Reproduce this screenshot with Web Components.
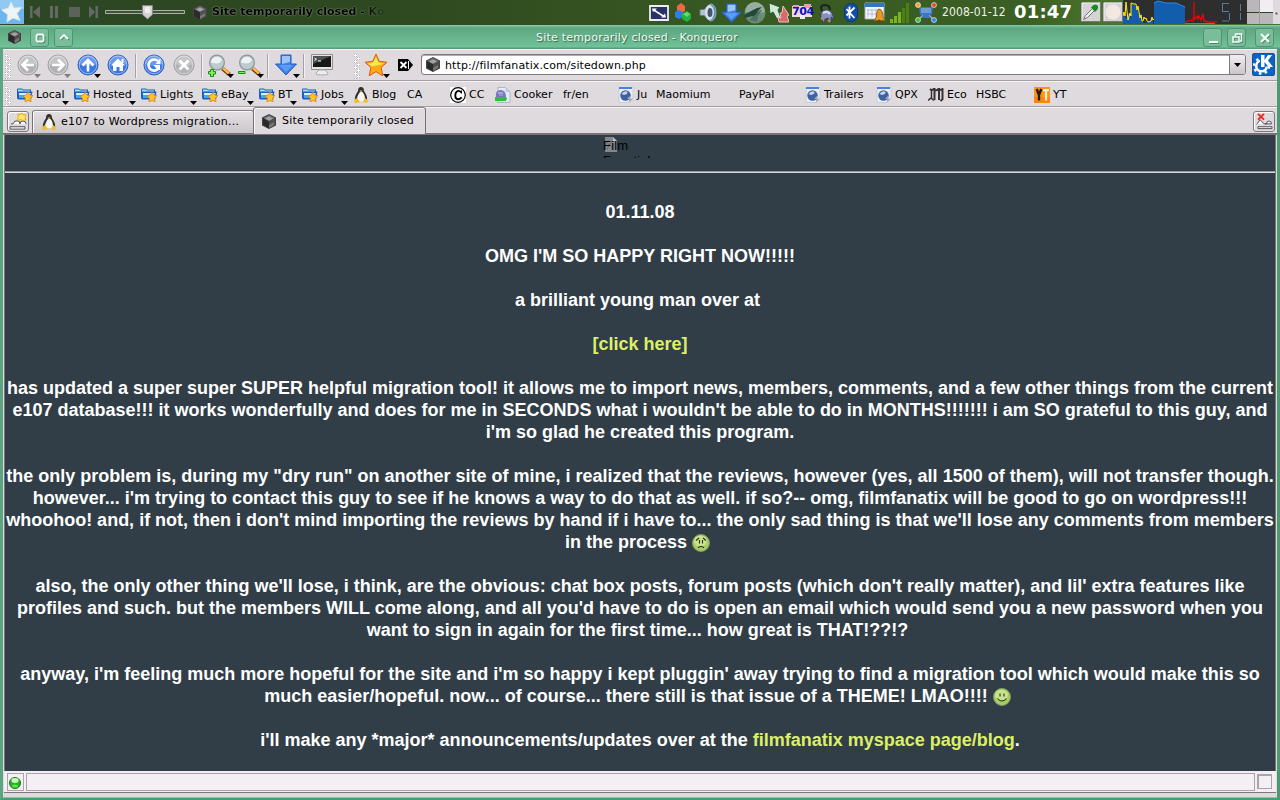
<!DOCTYPE html>
<html lang="en"><head><meta charset="utf-8"><title>Site temporarily closed - Konqueror</title>
<style>html,body{margin:0;width:1280px;height:800px;overflow:hidden;background:#2b4a25}</style></head>
<body><kde-desktop></kde-desktop>
<script>
const ball = (a,b,g) => `<circle cx="11" cy="11" r="10" fill="${b}" stroke="${a}"/><path d="M2 10a9 9 0 0 1 18 0q-9 4-18 0" fill="#fff" opacity=".25"/><circle cx="11" cy="11" r="8.8" fill="none" stroke="#fff" opacity=".45"/><g fill="none" stroke="#fff" stroke-width="2.600">${g}</g>`;
const cog = '<path d="M7 0 14 3.500v8L7 15 0 11.500v-8z" fill="#444"/><path d="M7 1 13 4 7 7.500 1 4z" fill="#6c6c6c"/><path d="M3 4.500 7 2.500l4 2-4 2z" fill="#a5a5a5"/><path d="M7 7.500 13 4v7L7 14.500z" fill="#4f4f4f"/><path d="M7 7.500 1 4v7l6 3.500z" fill="#2a2a2a"/><path d="M7 11l5-3v3l-5 3z" fill="#777"/>';
const lens = m => `<path d="M14.500 14.500l7 6" stroke="#6c4310" stroke-width="4"/><path d="M15 14l6 5.500" stroke="#ffb750" stroke-width="2.400"/><circle cx="9" cy="8.500" r="7.400" fill="#bccbd0" stroke="#8d9696" stroke-width="1.200"/><path d="M3 8.500a6 6 0 0 1 11-3q-2 6-11 3" fill="#fff" opacity=".75"/>${m}`;
const star = '<path d="M8 0 10.300 5.300 16 6 11.700 9.800 13 16 8 12.800 3 16 4.300 9.800 0 6 5.700 5.300z"';
const doc = '<path d="M1 .5h14v11l-4 4H1z" fill="#e9edf4" stroke="#c5cedb"/><path d="M1 0h13v2H1z" fill="#4385dc"/><circle cx="7.500" cy="8.500" r="5.200" fill="#41609f"/><path d="M3.500 7q3-4 6-2L9 7 6 8zM9 12l3-3q0 3-3 3z" fill="#c3d3ef"/><path d="M11 15.500 15 11.500h-4z" fill="#aaa"/>';
const smile = m => `<circle cx="9" cy="9" r="8.500" fill="#a7cd68" stroke="#7d9b55"/><ellipse cx="8.500" cy="7" rx="6.500" ry="5.500" fill="#dff0ac" opacity=".6"/><g fill="none" stroke="#26301b" stroke-width="1.100">${m}</g>`;
const ICONS = {
 kmenu:['0 0 24 24','<path d="M0 0h24v24H0z" fill="#6eb4ee"/><path d="M0 0h24v9H0z" fill="#91c9f5"/><path d="M11 2 14 8l7.500-.5L17 13.500l3 7L13 18l-6 4 .5-7.500L1.500 10l7-2z" fill="#f0f4f6" stroke="#d3e3ec" stroke-linejoin="round"/>'],
 prev:['0 0 11 14','<path d="M0 1h2.500v12H0zM10 1v12L3 7z" fill="#656965"/>'],
 pause:['0 0 11 14','<path d="M1 1h3v12H1zM6 1h3v12H6z" fill="#656965"/>'],
 stop:['0 0 11 14','<path d="M0 2h11v10H0z" fill="#5c615a"/>'],
 next:['0 0 11 14','<path d="M1 1v12l6-6zM7.500 1H10v12H7.500z" fill="#656965"/>'],
 slider:['0 0 80 16','<path d="M.5 6.500h79v3H.5z" fill="#43513b" stroke="#aab0a7"/><path d="M37.500 1.500h10v9l-5 4.500-5-4.500z" fill="#d5d3d6" stroke="#888"/><path d="M40 3h5v6h-5z" fill="#efedf0"/>'],
 cube:['0 0 14 15',cog],
 screen:['0 0 20 16','<path d="M1 1h18v14H1z" fill="#283268" stroke="#eee" stroke-width="1.800"/><path d="M4 4.500l11 7" stroke="#fff" stroke-width="1.500"/><path d="M3 3.500h5L4 7zM17 12.500h-5l4-4z" fill="#fff"/>'],
 hexes:['0 0 17 19','<path d="M6 0l4 3v5l-4 3-4-3V3z" fill="#f2673b"/><path d="M4 7l4 2v5l-4 2-4-2V9z" fill="#2d81e5"/><path d="M12 8l4 3v5l-4 3-5-3v-5z" fill="#22b53b"/><path d="M12 9l3 2-3 3-4-3z" fill="#65dd75"/>'],
 speaker:['0 0 18 19','<path d="M1 6.500h4l6-5v16l-6-5H1z" fill="#b5c2ce" stroke="#67788b"/><ellipse cx="12" cy="9.500" rx="5" ry="8.500" fill="#5f93c0" stroke="#89a8c0"/><ellipse cx="10.500" cy="9.500" rx="4.500" ry="7.500" fill="#d6e1ea"/><ellipse cx="11" cy="9.500" rx="2.500" ry="4.500" fill="#44576b"/>'],
 down:['0 0 22 22','<path d="M6 1h10v9h5.500L11 21 .5 10H6z" fill="#3d80e6" stroke="#2459bb"/><path d="M7 2h8v6L7 10z" fill="#9cc4fb"/><path d="M4 11h14l-7 7z" fill="#5c9cf2"/>'],
 ksnap:['0 0 22 22','<circle cx="11" cy="11" r="10.500" fill="#6b8d78"/><path d="M1 10a10 10 0 0 1 20 0q-10 2-20 0" fill="#98aea0"/><path d="M0 13l7-4 6-3 5-1-4 4-2 7-4-2-7 2z" fill="#24493a"/><path d="M5 18l5-4 6-6 2 0-4 6-1 6z" fill="#4f7460"/>'],
 updown:['0 0 20 20','<path d="M0 0l11 4-2 3 3 8-4 1-4-7-3 2z" fill="#d5e9da" stroke="#1f5e3b"/><path d="M14 3l6 9-2 1 2 6H10l-1-5 3 1-1-5 2 0z" fill="#d66b6b" stroke="#f2bdbd"/>'],
 trans:['0 0 22 16','<path d="M0 2h20v11H0z" fill="#f5dadd"/><path d="M1 1h6v3H1zM12 0h7v4h-7z" fill="#e6a0a5"/><path d="M8 10h5v5H8z" fill="#eee"/>'],
 kget:['0 0 16 20','<path d="M3 7Q0 1 6 1q5 0 5 5" fill="none" stroke="#1c1f2b" stroke-width="2"/><path d="M2 9q6-6 11 0l2 6-3-2 0 6-3-5-3 1-1 4-3-5z" fill="#8790be" stroke="#353b63" stroke-width=".7"/><path d="M4 9q4-3 7 1" stroke="#d4d7ee" fill="none" stroke-width="2.500"/><path d="M2 15l2-1M9 16l2 2" stroke="#c68b60" stroke-width="2"/>'],
 bt:['0 0 14 19','<rect x=".5" y=".5" width="13" height="18" rx="6" fill="#124fa9" stroke="#0b3680"/><path d="M5.500 3.500v12M10.500 4.500l-5 5 5 5.500M2.500 6l3 3.500-3 3" stroke="#fff" stroke-width="1.800" fill="none"/>'],
 cal:['0 0 22 21','<path d="M1 1h19v16H1z" fill="#f2f5fa" stroke="#aab"/><path d="M1 1h19v4H1z" fill="#3573c5"/><path d="M4 7v8M8 7v8M12 7v8M16 7v8M3 8h15M3 12h15" stroke="#b3bfd3"/><path d="M15 7q-2.500 1-2.500 8l-2.500 3.500h11L19 15q0-7-4-8" fill="#e79b27" stroke="#96600c"/><circle cx="15" cy="19" r="1.500" fill="#704207"/>'],
 signal:['0 0 19 20','<path d="M0 16h3v4H0zM4 13h3v7H4zM8 9h3v11H8z" fill="#7bb51c"/><path d="M12 5h3v15h-3zM16 0h3v20h-3z" fill="#4e7f14"/>'],
 net:['0 0 22 21','<path d="M4 4l14 13M18 4 4 17" stroke="#aab9cd" stroke-width="1.200"/><path d="M4 5h14l-1 8h-3l1 3H7l1-3H5z" fill="#3d74c5"/><path d="M6 6h10v5H6z" fill="#6f9bd5"/><circle cx="3" cy="3" r="2.500" fill="#f0a33a" stroke="#fff" stroke-width=".6"/><circle cx="19" cy="3" r="2.500" fill="#e54c2c" stroke="#fff" stroke-width=".6"/><circle cx="3" cy="18" r="2.500" fill="#42bd43" stroke="#fff" stroke-width=".6"/><circle cx="19" cy="18" r="2.500" fill="#3987e5" stroke="#fff" stroke-width=".6"/>'],
 pen:['0 0 20 20','<path d="M.5.5h19v19H.5z" fill="#d6d3d6" stroke="#777"/><path d="M1 1h18M1 1v18" stroke="#f7f5f7"/><path d="M2.500 17.500l2-4 7-7 2 2-7 7z" fill="#eee" stroke="#777"/><path d="M10 5.500q3-4 6-2.500 3 3-2 7z" fill="#198b22"/>'],
 paper:['0 0 20 20','<path d="M.5.5h19v19H.5z" fill="#d6d3d6" stroke="#777"/><path d="M1 1h18M1 1v18" stroke="#f7f5f7"/><circle cx="10" cy="10" r="7.500" fill="#f2e8df"/>'],
 graph:['0 0 124 24','<path d="M0 0h124v24H0z" fill="#2e2e2e"/><path d="M0 24V17l2-2 1 4 3-7 2 7V3l4 2 3 6 2 4 2-2v9l3 1 8-4v6z" fill="#165ba9"/><path d="M0 16 1 12l1 4 1-14 1 9 1 9 2-7 1 3V3l3 1 2 0 1 6 1-4 2 12 1-3 1 6 1 0 1-4 1 2 1-1 1 3 2 1 2-1 1-4 1 3 2-2" fill="none" stroke="#ffed19"/><path d="M31 2l4-1 8 2h10l9 4v17H31z" fill="#125dac"/><path d="M31 3l4-2 8 2h10l9 4" fill="none" stroke="#2688ef"/><path d="M62 23.500h30" stroke="#2688ef"/><path d="M62 22l4-1 1-1 3 1 1-6V2v16l1 1 2-3 1 3 1-3 2 4 2-6 1 7 4 1 2 0h7" fill="none" stroke="#f60000" stroke-width="1.300"/><path d="M99 3.500h7M99.500 4v7M99 11.500h7M106.500 13v7M99 21h7M117.500 4v7M117.500 13v7" stroke="#547ba0" fill="none"/>'],
 pager:['0 0 33 24','<path d="M0 0h33v24H0z" fill="#bab6ba"/><path d="M13 0h13v12H13z" fill="#f2edf3"/><path d="M26 0h7v24h-7z" fill="#dedade"/><path d="M0 12.500h26" stroke="#28451f"/><path d="M12.500 0v24" stroke="#a09ca1"/><circle cx="29.500" cy="13.500" r="1.300" fill="#777"/>'],
 back:['0 0 22 22',ball('#a09fa1','#b2b1b3','<path d="M17 11H6M11 5.500 5.500 11l5.500 5.500"/>')],
 fwd:['0 0 22 22',ball('#a09fa1','#b2b1b3','<path d="M5 11h11M11 5.500l5.500 5.500-5.500 5.500"/>')],
 up:['0 0 22 22',ball('#2b60c5','#3977e3','<path d="M11 17.500V6M5.500 11.500 11 6l5.500 5.500"/>')],
 home:['0 0 22 22',ball('#2b60c5','#3977e3','<path d="M4 11.500 11 4.500l7 7h-2V17h-3.500v-4h-3v4H6v-5.500z" fill="#fff" stroke="none"/><path d="M15.500 5v4" stroke-width="2"/>')],
 reload:['0 0 22 22',ball('#2b60c5','#3977e3','<path d="M15 7A5.600 5.600 0 1 0 15.500 14.500"/><path d="M10.500 11H17v5h-2.500zM17.500 4v6h-5z" fill="#fff" stroke="none"/>')],
 cancel:['0 0 22 22',ball('#a09fa1','#b2b1b3','<path d="M6.500 6.500l9 9M15.500 6.500l-9 9" stroke-width="3"/>')],
 zin:['0 0 24 24',lens('<path d="M.5 17.500h2v-2h3v2h2v2.500h-2v2.500h-3V20h-2z" fill="#80ed5b" stroke="#168e12"/>')],
 zout:['0 0 24 24',lens('<path d="M.5 17.500h6.500v2H.5z" fill="#80ed5b" stroke="#168e12"/>')],
 term:['0 0 22 22','<path d="M.5.5h21v15H.5z" fill="#e4e5e2" stroke="#91928f"/><path d="M2 2h18v11H2z" fill="#161917"/><path d="M2 2h18L2 10z" fill="#4c504e"/><path d="M3.500 4l2 1.200-2 1.300M7 7h3" stroke="#fff" fill="none"/><path d="M8 16h6l3 3q1 2-6 2t-6-2z" fill="#ececea" stroke="#aaa"/>'],
 fav:['0 0 16 16',star+' fill="#ffac10" stroke="#e54e10" stroke-width=".7"/><path d="M8 2 9.700 6 14 7l-9 2-3-2 4-1z" fill="#ffe35c"/>'],
 clear:['0 0 15 12','<path d="M0 0h10l5 6-5 6H0z" fill="#000"/><path d="M2.500 3l6 6M8.500 3l-6 6" stroke="#fff" stroke-width="1.800"/><path d="M10.500 2v8" stroke="#fff"/>'],
 arrow:['0 0 7 4','<path d="M0 0h7L3.500 4z" fill="currentColor"/>'],
 kgear:['0 0 23 23','<rect x=".5" y=".5" width="22" height="22" rx="1.500" fill="#0765c7" stroke="#20518c"/><circle cx="9.500" cy="13" r="5.300" fill="none" stroke="#fff" stroke-width="2.600"/><circle cx="9.500" cy="13" r="7.600" fill="none" stroke="#fff" stroke-width="2.200" stroke-dasharray="2.600 3.370"/><path d="M8 1h13v12.500H8z" fill="#0765c7"/><path d="M9 2h3.500v5L16 2h4l-4 5.500 5 6.500h-4.500l-4-5v5H9z" fill="#fff"/>'],
 folder:['0 0 16 14','<path d="M0 1.500Q0 .5 1 .5h4l1 1h8v2h1.500L14 11.500H1L0 10z" fill="#1b5fc2"/><path d="M1 1.500h4l1 1h7v1H1z" fill="#9fe0ff"/><path d="M2 5h12l-1 5H2z" fill="#4aa5ea"/><path d="M2 5h11.500L13 7H2z" fill="#d5f3ff"/><path d="M11 4l1.600 3 3.400.6-2.400 2.400.4 3.800-3-1.400-3 1.400.3-3.800L6 7.600 9.300 7z" fill="#ffc32a" stroke="#dc7608" stroke-width=".7"/>'],
 tux:['0 0 14 16','<path d="M7 0q3 0 3 4 4 6 3 9H1Q0 10 4 4q0-4 3-4" fill="#30302e"/><path d="M6 5h2.500Q12 9 10.500 14h-7Q2 10 6 5" fill="#f6f5f1"/><path d="M5.500 3.500h3L7 5.500zM0 13l3-2 3 4-5 1zM14 13l-3-2-2 4 4 1z" fill="#f2bd22"/>'],
 cc:['0 0 16 16','<path d="M0 0h16v16H0z" fill="#fff"/><circle cx="8" cy="8" r="7.300" fill="#fff" stroke="#000" stroke-width="1.200"/><path d="M11.500 5.500Q8 2 5.700 6q-1.500 5 2 6.300 2 .2 4-2" fill="none" stroke="#000" stroke-width="1.900"/><path d="M11.500 3.500v3" stroke="#000"/>'],
 cooker:['0 0 16 16','<path d="M3 .5h7.500L15 5v10.500H3z" fill="#e6ecf5" stroke="#a9b8cb"/><path d="M10.500 1v4H15z" fill="#b9cde8"/><path d="M1 10q-1-7 4.500-7T11 10z" fill="#7b76bf"/><path d="M3 6h5" stroke="#d4d6fa"/><path d="M4 8h4" stroke="#a9a7dc"/><path d="M0 10h11l1 1-1 3H0z" fill="#24c634"/>'],
 doc:['0 0 16 16',doc],
 eco:['0 0 16 14','<path d="M2 1q2 2 4.500-.5V12M7 2.500q2 0 4-2V12M11.500 2q2 0 3.500-1.500-1 2-.5 3V11l-2 2" fill="none" stroke="#333" stroke-width="2"/><path d="M3.500 2v8M0 12.500l3-2.500 3 2.500" fill="none" stroke="#333" stroke-width="1.500"/>'],
 yt:['0 0 16 16','<path d="M0 0h16v16H0z" fill="#ff9410"/><path d="M0 10h16v6H0z" fill="#fb7708" opacity=".5"/><path d="M2.700 2l2.300 6v5.500M7.300 2 5 8" stroke="#231b15" stroke-width="2.400" fill="none"/><path d="M9 3.200h6M12 3v10.500" stroke="#fff0dc" stroke-width="2.200"/>'],
 newtab:['0 0 20 20','<path d="M3 12.500h2l2-3h4l1 3M12 12.500q0-3 3-3t3 3M2 15.500h15v2.500H2z" fill="#f9f7fa" stroke="#514e52"/><path d="M10 2l2 1 2-2 1 2h3l-1 3 1 2-3 1-2-1-3 1V6z" fill="#ffec66" stroke="#e9a800"/>'],
 closetab:['0 0 20 20','<path d="M2.500 13l1-1 2.500-4 4 4.500h2.500q0-3 2.500-3t2.500 3H11M4 15.500h14v2H4z" fill="#f9f7fa" stroke="#514e52"/><path d="M4 2l6 6M10 2 4 8" stroke="#ee2a20" stroke-width="2"/>'],
 broken:['0 0 14 16','<path d="M1 0h8l4 4v11H1z" fill="#82888c"/><path d="M9 0v4h4z" fill="#b7bdc2"/><path d="M2 5l7 6M8 4l-5 8" stroke="#5e686d"/>'],
 sad:['0 0 18 18',smile('<path d="M7.500 6v3.500M10.500 6v3.500M4 6.500 7 4M11 4l3 2.500M6 13.800q3-2.500 6 0"/>')],
 happy:['0 0 18 18',smile('<path d="M7 5.500v3M11 5.500v3M4.500 10.500q4.500 5 9 0"/>')],
 led:['0 0 12 12','<circle cx="6" cy="6" r="5.500" fill="#25b51f" stroke="#147a15"/><ellipse cx="6" cy="3.500" rx="3.600" ry="2.400" fill="#cff7c4"/><ellipse cx="6" cy="9" rx="3" ry="1.600" fill="#60e745"/>'],
 circ:['0 0 18 18','<path d="M6.500 5.500h5l1 1v5l-1 1h-5l-1-1v-5z" fill="none" stroke="#4a8868" stroke-width="1.800" transform="translate(1 1)"/><path d="M6.500 5.500h5l1 1v5l-1 1h-5l-1-1v-5z" fill="none" stroke="#f4fff9" stroke-width="1.800"/>'],
 shade:['0 0 18 18','<path d="M6 11l4-4 4 4" fill="none" stroke="#4a8868" stroke-width="1.600"/><path d="M5 10l4-4 4 4" fill="none" stroke="#f4fff9" stroke-width="1.800"/>'],
 min:['0 0 18 18','<path d="M6 14.500h9" stroke="#4a8868"/><path d="M5 13h9" stroke="#f4fff9" stroke-width="2"/>'],
 rest:['0 0 18 18','<path d="M7.500 7V5h6v7H12M5 8h6v5H5z" fill="none" stroke="#4a8868" stroke-width="1.300" transform="translate(1 1)"/><path d="M7.500 7V5h6v7H12M5 8h6v5H5z" fill="none" stroke="#f4fff9" stroke-width="1.500"/>'],
 x:['0 0 18 18','<path d="M6 6l8 8M14 6l-8 8" stroke="#4a8868" stroke-width="2"/><path d="M5 5l8 8M13 5l-8 8" stroke="#f4fff9" stroke-width="2.200"/>']
};
const define = (tag, html) => customElements.define(tag, class extends HTMLElement {
  constructor(){ super(); this.attachShadow({mode:'open'}).innerHTML = html; }
});
/* <kde-icon name w h ml mt>: one drawing out of the icon table */
customElements.define('kde-icon', class extends HTMLElement {
  connectedCallback(){
    const a = n => this.getAttribute(n), [vb,body] = ICONS[a('name')], v = vb.split(' ');
    const w = a('w')||v[2], h = a('h')||v[3];
    (this.shadowRoot||this.attachShadow({mode:'open'})).innerHTML = `<style>:host{display:block;flex:none;width:${w}px;height:${h}px;margin-left:${a('ml')||0}px;margin-top:${a('mt')||0}px}svg{display:block}</style><svg width="${w}" height="${h}" viewBox="${vb}" preserveAspectRatio="none">${body}</svg>`;
  }
});
/* <tool-button name w menu>: toolbar icon, with an optional popup marker */
customElements.define('tool-button', class extends HTMLElement {
  connectedCallback(){
    const a = n => this.getAttribute(n)||'';
    this.attachShadow({mode:'open'}).innerHTML = `<style>:host{display:block;position:relative;flex:none;width:${a('w')}px}.m{position:absolute;left:${a('mx')||17}px;top:20px;color:${a('menu')||'#000'}}</style><kde-icon name="${a('name')}" w="${a('iw')||22}" h="${a('ih')||22}"></kde-icon>${a('menu')?'<kde-icon class="m" name="arrow"></kde-icon>':''}`;
  }
});
/* <book-mark icon w menu>label</book-mark> */
customElements.define('book-mark', class extends HTMLElement {
  connectedCallback(){
    const a = n => this.getAttribute(n)||'';
    this.attachShadow({mode:'open'}).innerHTML = `<style>:host{display:flex;position:relative;flex:none;align-items:center;width:${a('w')}px;height:18px;white-space:nowrap}.t{margin-left:${a('icon')?(a('g')||3):0}px}.m{position:absolute;left:${a('menu')}px;top:15px;color:#000}</style>${a('icon')?`<kde-icon name="${a('icon')}" w="${a('iw')||16}" h="${a('ih')||16}"></kde-icon>`:''}<span class="t"><slot></slot></span>${a('menu')?'<kde-icon class="m" name="arrow"></kde-icon>':''}`;
  }
});
define('tool-handle','<style>:host{display:block;flex:none;width:6px;height:25px;background:radial-gradient(circle at 1.5px 1.5px,#fff 1px,#aaa6aa 1.5px,transparent 2px) 0 0/6px 6px,radial-gradient(circle at 1.5px 1.5px,#fff 1px,#aaa6aa 1.5px,transparent 2px) 3px 3px/6px 6px}</style>');
define('tool-sep','<style>:host{display:block;flex:none;width:1px;height:24px;background:#a5a1a5;border-right:1px solid #f5f2f5}</style>');
define('win-button','<style>:host{display:block;flex:none;box-sizing:border-box;width:19px;height:19px;border:1px solid #4f9573;border-radius:3px;background:#79bd9b;overflow:hidden}</style><slot></slot>');
define('desk-panel',`<style>:host{display:flex;height:25px;background:linear-gradient(90deg,#2d4624,#2e4820 30%,#395b22 60%,#3a5e23 80%,#4a732b 86%);font:11px "DejaVu Sans",sans-serif;position:relative}
.song{width:176px;margin:5px 0 0 5px;font-weight:bold;line-height:14px;white-space:nowrap;overflow:hidden;color:#000;text-shadow:0 0 2px #8a9a80,0 0 1px #8a9a80;-webkit-mask:linear-gradient(90deg,#000 150px,transparent 175px)}
.num{position:relative;width:22px;flex:none;margin:4px 0 0 3px}.num span{position:absolute;left:0;top:1px;font:bold 11px/14px "DejaVu Sans",sans-serif;color:#0a12c6;letter-spacing:-.4px}
.date{font:12px/14px "DejaVu Sans Condensed","DejaVu Sans",sans-serif;color:#f0f2ec;margin:5px 0 0 5px;width:65px;white-space:nowrap;flex:none;letter-spacing:.1px}
.time{font:bold 18px/22px "DejaVu Sans",sans-serif;color:#fff;margin:1px 0 0 7px;width:67px;flex:none;letter-spacing:.2px}</style>
<kde-icon name="kmenu"></kde-icon><kde-icon name="prev" ml="6" mt="5"></kde-icon><kde-icon name="pause" ml="8" mt="5"></kde-icon><kde-icon name="stop" ml="9" mt="5"></kde-icon><kde-icon name="next" ml="8" mt="5"></kde-icon><kde-icon name="slider" ml="6" mt="4"></kde-icon><kde-icon name="cube" ml="8" mt="5"></kde-icon>
<div class="song">Site temporarily closed - Ko</div>
<kde-icon name="screen" ml="261" mt="5"></kde-icon><kde-icon name="hexes" ml="6" mt="3"></kde-icon><kde-icon name="speaker" ml="7" mt="3"></kde-icon><kde-icon name="down" w="21" h="20" ml="4" mt="3"></kde-icon><kde-icon name="ksnap" ml="2" mt="2"></kde-icon><kde-icon name="updown" ml="3" mt="3"></kde-icon>
<div class="num"><kde-icon name="trans"></kde-icon><span>704</span></div>
<kde-icon name="kget" ml="5" mt="4"></kde-icon><kde-icon name="bt" ml="9" mt="3"></kde-icon><kde-icon name="cal" ml="6" mt="2"></kde-icon><kde-icon name="signal" ml="4" mt="3"></kde-icon><kde-icon name="net" ml="6" mt="2"></kde-icon>
<div class="date">2008-01-12</div><div class="time">01:47</div>
<kde-icon name="pen" mt="2"></kde-icon><kde-icon name="paper" ml="2" mt="2"></kde-icon><kde-icon name="graph"></kde-icon><kde-icon name="pager"></kde-icon>`);
define('title-bar',`<style>:host{display:flex;box-sizing:border-box;height:24px;padding:3px 6px 0 9px;background:linear-gradient(#87cfab 0,#5ea681 3px,#70c298 22px,#5b9a7b 23px,#5b9a7b);font:11px/19px "DejaVu Sans",sans-serif;color:#f0faf4;text-shadow:1px 1px 1px #35664d}
span{flex:1;text-align:center;white-space:nowrap;letter-spacing:.2px;margin-right:2px}</style>
<kde-icon name="cube" w="13" h="14" mt="2" ml="-1"></kde-icon><win-button style="margin-left:9px"><kde-icon name="circ"></kde-icon></win-button><win-button style="margin-left:5px"><kde-icon name="shade"></kde-icon></win-button>
<span>Site temporarily closed - Konqueror</span>
<win-button><kde-icon name="min"></kde-icon></win-button><win-button style="margin-left:5px"><kde-icon name="rest"></kde-icon></win-button><win-button style="margin-left:9px"><kde-icon name="x"></kde-icon></win-button>`);
define('nav-bar',`<style>:host{display:flex;box-sizing:border-box;height:32px;padding:4px 0 0 3px;border-top:1px solid #f7f4f7;border-bottom:1px solid #a29ea2;font:11px/22px "DejaVu Sans",sans-serif;color:#000}
.url{display:flex;box-sizing:border-box;width:825px;height:21px;margin-left:8px;border:1px solid #7d797d;border-radius:3px;background:#fff;box-shadow:inset 0 1px #b0acb0;padding-left:4px}
.url b{font-weight:normal;margin-left:5px;flex:1;letter-spacing:.1px;height:19px}.dd{width:15px;border-left:1px solid #7d797d;background:linear-gradient(#f2eff2,#c9c5c9);display:block;border-radius:0 2px 2px 0}</style>
<tool-handle style="margin-right:6px;margin-left:-1px"></tool-handle>
<tool-button name="back" w="30" menu="#807c80"></tool-button><tool-button name="fwd" w="30" menu="#807c80"></tool-button><tool-button name="up" w="30" menu="#000"></tool-button><tool-button name="home" w="28"></tool-button>
<tool-sep style="margin-right:6px"></tool-sep><tool-button name="reload" w="30"></tool-button><tool-button name="cancel" w="28"></tool-button><tool-sep style="margin-right:5px"></tool-sep>
<tool-button name="zin" w="30" iw="24" ih="24" menu="#000" mx="19"></tool-button><tool-button name="zout" w="29" iw="24" ih="24" menu="#000" mx="19"></tool-button><tool-sep style="margin-right:6px"></tool-sep>
<tool-button name="down" w="28" menu="#000" mx="18"></tool-button><tool-sep style="margin-right:6px"></tool-sep><tool-button name="term" w="43"></tool-button>
<tool-handle style="margin-right:5px"></tool-handle><tool-button name="fav" w="33" menu="#000" mx="18"></tool-button><kde-icon name="clear" mt="5"></kde-icon>
<div class="url"><kde-icon name="cube" mt="2"></kde-icon><b>http://filmfanatix.com/sitedown.php</b><span class="dd"><kde-icon name="arrow" ml="4" mt="8"></kde-icon></span></div><kde-icon name="kgear" ml="6" mt="-1"></kde-icon>`);
define('bookmark-bar',`<style>:host{display:flex;box-sizing:border-box;height:26px;padding:4px 0 0 3px;border-top:1px solid #f7f4f7;border-bottom:1px solid #a29ea2;font:11px/18px "DejaVu Sans",sans-serif;color:#000}</style>
<tool-handle style="height:20px;margin-right:6px;margin-left:-1px"></tool-handle>
<book-mark icon="folder" ih="14" menu="45" w="57">Local</book-mark><book-mark icon="folder" ih="14" menu="55" w="67">Hosted</book-mark><book-mark icon="folder" ih="14" menu="49" w="61">Lights</book-mark><book-mark icon="folder" ih="14" menu="45" w="57">eBay</book-mark><book-mark icon="folder" ih="14" menu="31" w="43">BT</book-mark><book-mark icon="folder" ih="14" menu="39" w="52">Jobs</book-mark>
<book-mark icon="tux" iw="14" g="4" w="53">Blog</book-mark><book-mark w="43">CA</book-mark><book-mark icon="cc" w="45">CC</book-mark><book-mark icon="cooker" w="68">Cooker</book-mark><book-mark w="55">fr/en</book-mark><book-mark icon="doc" w="38">Ju</book-mark><book-mark w="83">Maomium</book-mark><book-mark w="66">PayPal</book-mark><book-mark icon="doc" w="71">Trailers</book-mark><book-mark icon="doc" w="52">QPX</book-mark><book-mark icon="eco" ih="14" w="48">Eco</book-mark><book-mark w="58">HSBC</book-mark><book-mark icon="yt" w="40">YT</book-mark>`);
define('tab-item',`<style>:host{display:flex;flex:none;box-sizing:border-box;align-items:center;gap:4px;border:1px solid #767276;border-top-color:#858185;border-radius:3px 3px 0 0;padding:0 0 0 9px;white-space:nowrap;box-shadow:inset 1px 1px #faf7fa;background:linear-gradient(#e3dfe3,#cbc7cb);width:222px;height:24px;margin-top:2px;letter-spacing:.25px}
:host([active]){width:173px;height:27px;margin-top:-1px;background:#dedade;border-bottom:0;padding:0 0 0 8px;gap:6px;margin-left:-1px;letter-spacing:.2px}</style><slot></slot>`);
define('tab-strip',`<style>:host{display:flex;box-sizing:border-box;height:28px;padding:0 2px 0 4px;border-top:1px solid #f7f4f7;border-bottom:2px solid #777377;font:11px/14px "DejaVu Sans",sans-serif;color:#000}
.b{flex:none;box-sizing:border-box;width:22px;height:21px;margin-top:3px;border:1px solid #7c787c;border-radius:3px;box-shadow:inset 1px 1px #fff;background:#dedade}</style>
<div class="b"><kde-icon name="newtab" h="19"></kde-icon></div><tab-item style="margin-left:3px"><kde-icon name="tux" w="14" h="16"></kde-icon><span style="margin-left:1px">e107 to Wordpress migration...</span></tab-item><tab-item active><kde-icon name="cube"></kde-icon><span>Site temporarily closed</span></tab-item><div class="b" style="margin-left:auto"><kde-icon name="closetab" h="19"></kde-icon></div>`);
define('web-page',`<style>:host{display:block;box-sizing:border-box;height:636px;border:solid #77747a;border-width:0 1px;background:#313e47;color:#fff;font:bold 18px/22px "Liberation Sans",Arial,sans-serif;text-align:center;white-space:nowrap;overflow:hidden;margin-right:1px}
.logo{display:flex;height:23px;width:74px;margin:0 auto;position:relative;overflow:hidden;color:#000;font:13px/16px "Liberation Sans",sans-serif}
.logo span{position:absolute;left:0;top:3px;text-align:left;letter-spacing:.2px;line-height:15px}
hr{margin:13px 0 28px;border:0;border-top:1px solid #9a9da0;border-bottom:1px solid #d6d6d8}p{margin:0 0 22px}i{font-style:normal;color:#dcef69}kde-icon{display:inline-block;vertical-align:-4px}.logo kde-icon{display:block}</style>
<div class="logo"><kde-icon name="broken" ml="1" mt="2"></kde-icon><span>Film<br>Fanatix!</span></div><hr>
<p>01.11.08</p><p>OMG I'M SO HAPPY RIGHT NOW!!!!!</p><p>a brilliant young man over at&nbsp;</p><p><i>[click here]</i></p>
<p>has updated a super super SUPER helpful migration tool! it allows me to import news, members, comments, and a few other things from the current<br>e107 database!!! it works wonderfully and does for me in SECONDS what i wouldn't be able to do in MONTHS!!!!!!! i am SO grateful to this guy, and<br>i'm so glad he created this program.</p>
<p>the only problem is, during my "dry run" on another site of mine, i realized that the reviews, however (yes, all 1500 of them), will not transfer though.<br>however... i'm trying to contact this guy to see if he knows a way to do that as well. if so?-- omg, filmfanatix will be good to go on wordpress!!!<br>whoohoo! and, if not, then i don't mind importing the reviews by hand if i have to... the only sad thing is that we'll lose any comments from members<br>in the process <kde-icon name="sad"></kde-icon>&nbsp;</p>
<p>also, the only other thing we'll lose, i think, are the obvious: chat box posts, forum posts (which don't really matter), and lil' extra features like<br>profiles and such. but the members WILL come along, and all you'd have to do is open an email which would send you a new password when you<br>want to sign in again for the first time... how great is THAT!??!?&nbsp;</p>
<p>anyway, i'm feeling much more hopeful for the site and i'm so happy i kept pluggin' away trying to find a migration tool which would make this so<br>much easier/hopeful. now... of course... there still is that issue of a THEME! LMAO!!!! <kde-icon name="happy"></kde-icon>&nbsp;</p>
<p>i'll make any *major* announcements/updates over at the <i>filmfanatix myspace page/blog</i>.</p>`);
define('status-bar',`<style>:host{display:flex;box-sizing:border-box;height:22px;margin:0 1px;padding:2px 4px 1px 3px;gap:2px;background:#f3eff4;border-bottom:1px solid #7b777b}div{box-sizing:border-box;border:1px solid #aaa3a8}.l{width:17px;padding:3px 1px}.m{flex:1}.r{width:15px;height:15px;margin-top:1px;border-width:2px 1px 1px 2px}</style><div class="l"><kde-icon name="led"></kde-icon></div><div class="m"></div><div class="r"></div>`);
define('app-window',`<style>:host{display:block;height:775px;box-sizing:border-box;border:solid #4b9a72;border-width:0 3px 2px;background:#dedade;border-left-color:#5ba680;box-shadow:inset 0 -1px #86c9a6}title-bar{margin:0 -3px}web-page{margin-left:1px}</style>
<title-bar></title-bar><nav-bar></nav-bar><bookmark-bar></bookmark-bar><tab-strip></tab-strip><web-page></web-page><status-bar></status-bar>`);
define('kde-desktop','<style>:host{display:block;width:1280px;height:800px;overflow:hidden}</style><desk-panel></desk-panel><app-window></app-window>');
</script></body></html>
